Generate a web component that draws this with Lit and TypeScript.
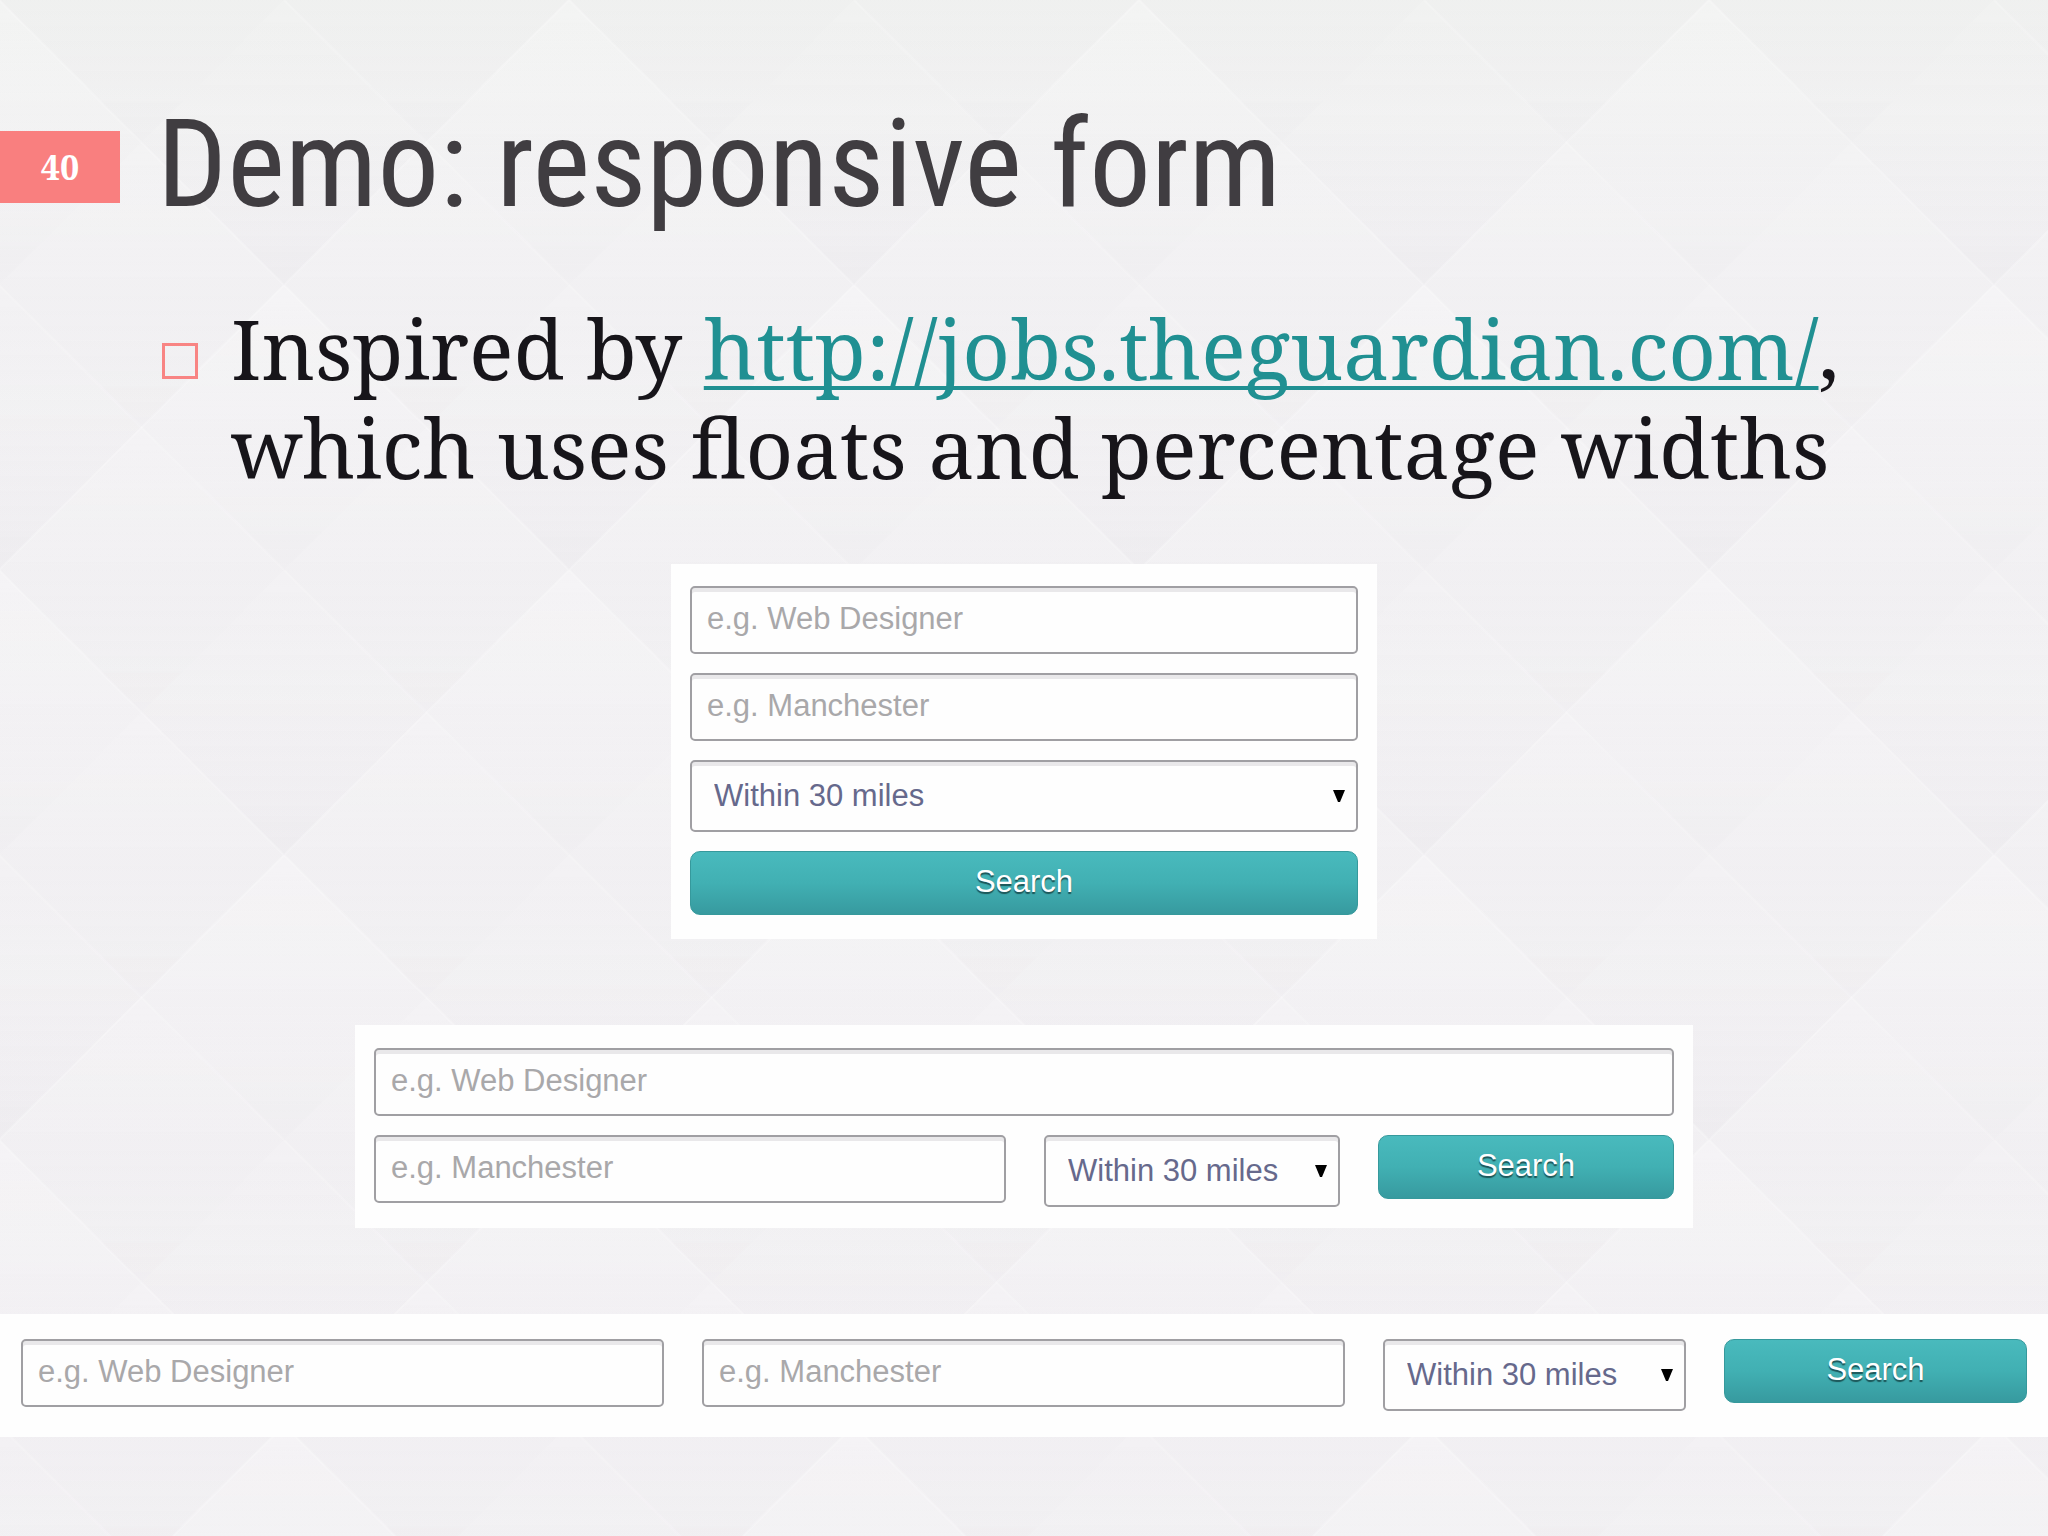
import { LitElement, html, svg, css } from "lit";
import { customElement, property } from "lit/decorators.js";

@customElement("diamond-backdrop")
export class DiamondBackdrop extends LitElement {
  static styles = css`
    :host {
      display: block;
    }
    .pattern {
      display: block;
      width: 100%;
      height: 100%;
    }
  `;

  /* One diamond whose top corner is at (x, y) and whose half diagonal is r. */
  private diamond(x: number, y: number, r: number, fill: string) {
    const points = `${x},${y} ${x + r},${y + r} ${x},${y + 2 * r} ${x - r},${y + r}`;
    return svg`<polygon points=${points} fill=${fill} />`;
  }

  render() {
    const large = [[284, 0], [0, 284], [568, 284], [0, -284], [568, -284]];
    const small: number[][] = [];
    for (let row = -1; row < 4; row++) {
      for (let col = 0; col < 5; col++) {
        if ((row + col) % 2 === 0) small.push([col * 142, row * 142]);
      }
    }
    return html`
      <svg class="pattern" aria-hidden="true">
        <defs>
          <linearGradient id="large" x1="0" y1="0" x2="0" y2="1">
            <stop offset="0" stop-color="#fff" stop-opacity="0.18" />
            <stop offset="0.5" stop-color="#fff" stop-opacity="0.02" />
            <stop offset="1" stop-color="#dcdadf" stop-opacity="0.1" />
          </linearGradient>
          <linearGradient id="small" x1="0" y1="0" x2="0" y2="1">
            <stop offset="0" stop-color="#fff" stop-opacity="0.06" />
            <stop offset="1" stop-color="#dcdadf" stop-opacity="0.07" />
          </linearGradient>
          <linearGradient id="sky" x1="0" y1="0" x2="0" y2="1">
            <stop offset="0" stop-color="#f0f1f0" />
            <stop offset="0.16" stop-color="#f2f1f3" />
            <stop offset="1" stop-color="#f2f0f3" />
          </linearGradient>
          <pattern id="tile" x="284" y="0" width="570" height="570" patternUnits="userSpaceOnUse" viewBox="0 0 568 568">
            ${small.map(([x, y]) => this.diamond(x, y, 142, "url(#small)"))}
            ${large.map(([x, y]) => this.diamond(x, y, 284, "url(#large)"))}
            <path d="M0 284L284 0L568 284L284 568Z" fill="none" stroke="#fff" stroke-opacity="0.2" stroke-width="2" />
            <path d="M142 142L426 426M0 0L142 142M426 426L568 568" fill="none" stroke="#fff" stroke-opacity="0.14" stroke-width="2" />
          </pattern>
        </defs>
        <rect width="100%" height="100%" fill="url(#sky)" />
        <rect width="100%" height="100%" fill="url(#tile)" />
      </svg>
    `;
  }
}

@customElement("job-search")
export class JobSearch extends LitElement {
  @property() layout: "stacked" | "split" | "inline" = "stacked";

  static styles = css`
    :host {
      display: block;
      font-family: "Liberation Sans", Arial, sans-serif;
    }
    * {
      box-sizing: border-box;
    }
    .form {
      display: grid;
      align-items: start;
      margin: 0;
      background: #fefefe;
    }
    .stacked {
      gap: 19px;
      padding: 22px 19px 24px;
    }
    .split {
      grid-template-columns: 632fr 296fr 296fr;
      gap: 19px 38px;
      padding: 23px 19px 21px;
    }
    .split .what {
      grid-column: 1 / -1;
    }
    .inline {
      grid-template-columns: 643fr 643fr 303fr 303fr;
      gap: 38px;
      padding: 25px 21px 26px;
    }
    .field {
      position: relative;
      min-width: 0;
    }
    .control {
      display: block;
      width: 100%;
      margin: 0;
      border: 2px solid #a09fa3;
      border-radius: 5px;
      background: #fefefe;
      box-shadow: inset 0 4px 0 #e9e8ea;
      font-family: inherit;
      font-size: 31px;
      outline-offset: 2px;
    }
    .text {
      height: 68px;
      padding: 0 15px 2px;
      color: #55555c;
    }
    .text::placeholder {
      color: #a9a8aa;
      opacity: 1;
    }
    .choice {
      height: 72px;
      padding: 0 30px 2px 22px;
      color: #66698c;
      appearance: none;
    }
    .arrow {
      position: absolute;
      right: 13px;
      top: 30px;
      width: 12px;
      height: 12px;
      pointer-events: none;
    }
    .submit {
      height: 64px;
      width: 100%;
      padding: 0 0 2px;
      border: 1px solid #36999c;
      border-radius: 10px;
      background: linear-gradient(#49babd, #41b0b3 50%, #379a9f);
      color: #fff;
      font-family: inherit;
      font-size: 31px;
      text-shadow: 0 2px 1px #1c5557;
    }
  `;

  render() {
    return html`
      <form class="form ${this.layout}" @submit=${(e: Event) => e.preventDefault()}>
        <div class="field what">
          <input class="control text" type="text" name="what" aria-label="Job" placeholder="e.g. Web Designer" />
        </div>
        <div class="field">
          <input class="control text" type="text" name="where" aria-label="Location" placeholder="e.g. Manchester" />
        </div>
        <div class="field">
          <select class="control choice" name="radius" aria-label="Distance">
            <option>Within 30 miles</option>
          </select>
          <svg class="arrow" viewBox="0 0 12 12" aria-hidden="true"><path d="M0 0H12L7 12H5Z" fill="#000" /></svg>
        </div>
        <button class="submit" type="submit">Search</button>
      </form>
    `;
  }
}

@customElement("app-root")
export class AppRoot extends LitElement {
  static styles = css`
    :host {
      display: block;
    }
    .slide {
      position: relative;
      box-sizing: border-box;
      min-height: 100vh;
      padding: 92px 0 96px;
      overflow: hidden;
      font-family: "Roboto Slab", "Noto Serif", serif;
      color: #17151a;
    }
    .backdrop {
      position: absolute;
      inset: 0;
    }
    .content {
      position: relative;
    }
    .header {
      display: flex;
      align-items: flex-start;
      gap: 37px;
    }
    .number {
      flex: none;
      width: 120px;
      margin-top: 39px;
      background: #f97f7f;
      color: #fff;
      font-size: 34px;
      font-weight: 700;
      line-height: 72px;
      text-align: center;
    }
    .title {
      margin: 0;
      color: #403d41;
      font-family: "Roboto Condensed", Roboto, sans-serif;
      font-size: 123px;
      font-weight: 400;
      line-height: 144px;
    }
    .points {
      margin: 62px 180px 68px 162px;
      padding: 0;
      list-style: none;
    }
    .point {
      display: flex;
      align-items: flex-start;
      gap: 33px;
      font-size: 83px;
      line-height: 99px;
    }
    .bullet {
      box-sizing: border-box;
      flex: none;
      width: 36px;
      height: 36px;
      margin-top: 45px;
      border: 3px solid #f88483;
    }
    .link {
      color: #209092;
      text-decoration-thickness: 4px;
      text-underline-offset: 6px;
      text-decoration-skip-ink: none;
    }
    .demos {
      display: grid;
      justify-items: center;
      gap: 86px;
    }
    .demo {
      width: 100%;
    }
    .narrow {
      max-width: 706px;
    }
    .medium {
      max-width: 1338px;
    }
  `;

  render() {
    return html`
      <main class="slide">
        <diamond-backdrop class="backdrop"></diamond-backdrop>
        <div class="content">
          <header class="header">
            <div class="number">40</div>
            <h1 class="title">Demo: responsive form</h1>
          </header>
          <ul class="points">
            <li class="point">
              <span class="bullet"></span>
              <span>Inspired by <a class="link" href="http://jobs.theguardian.com/">http://jobs.theguardian.com/</a>, which uses floats and percentage widths</span>
            </li>
          </ul>
          <div class="demos">
            <job-search class="demo narrow" layout="stacked"></job-search>
            <job-search class="demo medium" layout="split"></job-search>
            <job-search class="demo" layout="inline"></job-search>
          </div>
        </div>
      </main>
    `;
  }
}
